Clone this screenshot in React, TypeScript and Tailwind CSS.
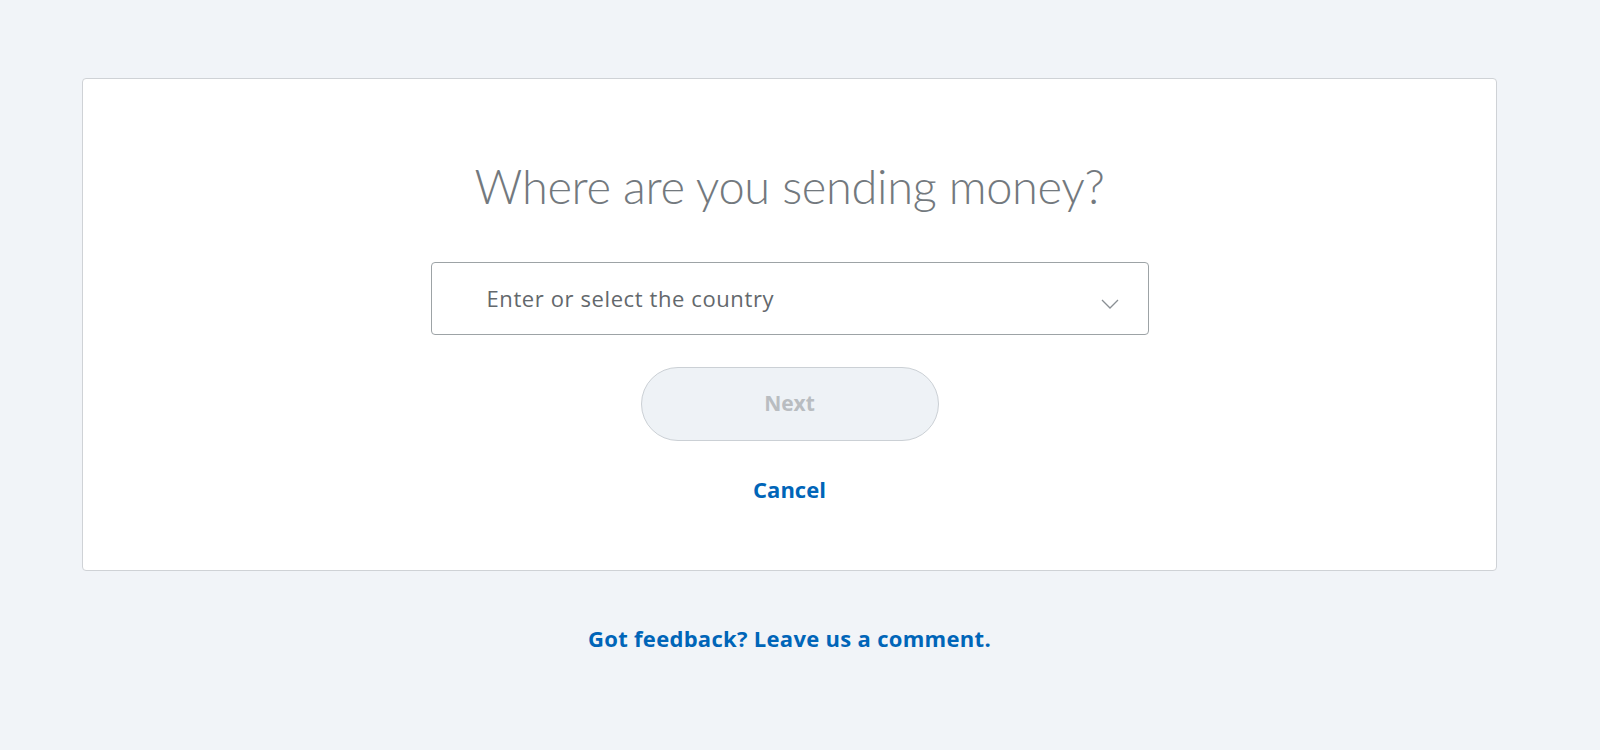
import React from "react";

const ChevronDown = () => (
  <svg width="18" height="10" viewBox="0 0 18 10" fill="none" className="mt-[10px] shrink-0">
    <path d="M1 1l8 8 8-8" stroke="#8a8f94" strokeWidth="1.3" />
  </svg>
);

export default function App() {
  return (
    <div className="min-h-[750px] w-full bg-[#f1f4f8] pt-[78px] font-['Lato',sans-serif]">
      <div className="ml-[82px] w-[1415px]">
        {/* main card */}
        <div className="flex h-[493px] flex-col items-center rounded-[4px] border border-[#cfd2d6] bg-white pt-[79px]">
          <h1 className="text-[47px] font-light leading-[56px] tracking-[-0.35px] text-[#73797e]">
            Where are you sending money?
          </h1>

          <div className="mt-[48px] flex h-[73px] w-[718px] items-center justify-between rounded-[4px] border border-[#9da3a6] pl-[55px] pr-[29px]">
            <span className="font-['Open_Sans',sans-serif] text-[22px] tracking-[0.6px] text-[#63686c]">
              Enter or select the country
            </span>
            <ChevronDown />
          </div>

          <button className="mt-[32px] flex h-[74px] w-[298px] items-center justify-center rounded-full border border-[#cbd0d5] bg-[#eef2f6] font-['Open_Sans',sans-serif] text-[21px] font-bold text-[#b9bdc1]">
            Next
          </button>

          <a href="#" className="mt-[34px] font-['Open_Sans',sans-serif] text-[22px] font-bold leading-[28px] text-[#0065b8]">
            Cancel
          </a>
        </div>

        <div className="mt-[53px] flex justify-center">
          <a href="#" className="font-['Open_Sans',sans-serif] text-[22px] font-bold leading-[28px] tracking-[0.3px] text-[#0065b8]">
            Got feedback? Leave us a comment.
          </a>
        </div>
      </div>
    </div>
  );
}
